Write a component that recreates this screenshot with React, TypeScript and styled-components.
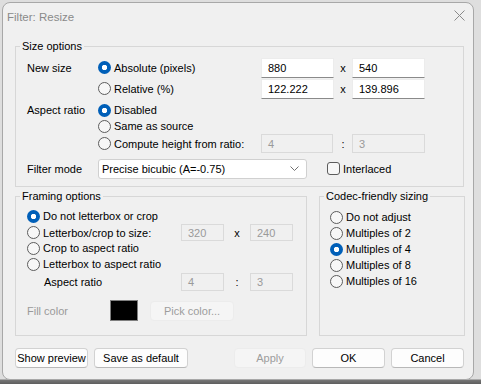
import styled, { createGlobalStyle } from "styled-components";

const GlobalStyle = createGlobalStyle`
  html, body {
    margin: 0;
    padding: 0;
  }
  body {
    width: 481px;
    height: 384px;
    overflow: hidden;
    background: linear-gradient(#dedede 0, #dedede 379px, #767676 380px, #5e5e5e 384px);
    font-family: "Liberation Sans", Arial, sans-serif;
    font-size: 11px;
    color: #000;
  }
`;

const Dialog = styled.div`
  margin: 2px 0 0 2px;
  width: 472px;
  height: 378px;
  box-sizing: border-box;
  border: 1px solid #a8a8a8;
  border-radius: 8px;
  background: #f0f0f0;
  display: flex;
  flex-direction: column;
`;

const TitleBar = styled.div`
  height: 30px;
  display: flex;
  justify-content: space-between;
  align-items: flex-start;
  padding: 6px 8px 0 4px;
  box-sizing: border-box;
`;

const Title = styled.span`
  font-size: 11.5px;
  line-height: 16px;
  color: #8a8a8a;
`;

const CloseIcon = styled.svg`
  margin-top: 1px;
`;

const Body = styled.div`
  padding: 6px 0 0 12px;
  display: flex;
  flex-direction: column;
`;

const Group = styled.fieldset<{ $w: number; $h?: number }>`
  margin: 0;
  padding: 0;
  min-width: 0;
  width: ${(p) => p.$w}px;
  ${(p) => (p.$h ? `height: ${p.$h}px;` : "")}
  box-sizing: border-box;
  border: 1px solid #d7d7d7;
`;

const Legend = styled.legend`
  margin-left: 4px;
  padding: 0 2px;
  line-height: 14px;
`;

const GroupContent = styled.div<{ $pt: number; $pl: number; $pb?: number }>`
  padding: ${(p) => p.$pt}px 0 ${(p) => p.$pb ?? 0}px ${(p) => p.$pl}px;
  display: flex;
  flex-direction: column;
`;

const SizeRow = styled.div<{ $h: number; $mt?: number }>`
  display: grid;
  grid-template-columns: 71px 163px 73px 18px 73px;
  align-items: center;
  height: ${(p) => p.$h}px;
  margin-top: ${(p) => p.$mt ?? 0}px;
`;

const FrameRow = styled.div<{ $h: number; $mt?: number; $indent?: number }>`
  display: grid;
  grid-template-columns: ${(p) => 154 - (p.$indent ?? 0)}px 43px 26px 43px;
  align-items: center;
  height: ${(p) => p.$h}px;
  margin-top: ${(p) => p.$mt ?? 0}px;
  padding-left: ${(p) => p.$indent ?? 0}px;
`;

const FlexRow = styled.div<{ $h: number; $mt?: number }>`
  display: flex;
  align-items: center;
  height: ${(p) => p.$h}px;
  margin-top: ${(p) => p.$mt ?? 0}px;
`;

const Label = styled.span<{ $w?: number; $muted?: boolean }>`
  ${(p) => (p.$w ? `width: ${p.$w}px; flex: none;` : "")}
  color: ${(p) => (p.$muted ? "#9a9a9a" : "#000")};
  white-space: nowrap;
`;

const Sep = styled.span`
  text-align: center;
`;

const Choice = styled.label<{ $ml?: number }>`
  display: flex;
  align-items: center;
  white-space: nowrap;
  margin-left: ${(p) => p.$ml ?? 0}px;
`;

const RadioDot = styled.span<{ $on?: boolean }>`
  width: 13px;
  height: 13px;
  box-sizing: border-box;
  border-radius: 50%;
  margin-right: 3px;
  flex: none;
  ${(p) =>
    p.$on
      ? `background: radial-gradient(circle, #fff 0 2.4px, #005fb8 3px);`
      : `background: #f7f7f7; border: 1px solid #5c5c5c;`}
`;

const CheckBox = styled.span`
  width: 13px;
  height: 13px;
  box-sizing: border-box;
  border: 1px solid #5c5c5c;
  border-radius: 3px;
  background: #f7f7f7;
  margin-right: 3px;
  flex: none;
`;

const Field = styled.div<{ $w: number; $h: number; $disabled?: boolean }>`
  width: ${(p) => p.$w}px;
  height: ${(p) => p.$h}px;
  box-sizing: border-box;
  display: flex;
  align-items: center;
  padding-left: 6px;
  ${(p) =>
    p.$disabled
      ? `background: #f0f0f0; border: 1px solid #dadada; color: #9a9a9a;`
      : `background: #fff; border: 1px solid #ececec; border-bottom-color: #8a8a8a; color: #000;`}
`;

const Select = styled.div`
  width: 209px;
  height: 20px;
  box-sizing: border-box;
  background: #fff;
  border: 1px solid #d0d0d0;
  border-radius: 3px;
  display: flex;
  align-items: center;
  justify-content: space-between;
  padding: 0 7px 0 3px;
`;

const Swatch = styled.div`
  width: 28px;
  height: 21px;
  box-sizing: border-box;
  background: #000;
  border: 1px solid #7f7f7f;
  flex: none;
`;

const Button = styled.button<{ $w: number; $ml?: number; $disabled?: boolean }>`
  width: ${(p) => p.$w}px;
  height: 20px;
  box-sizing: border-box;
  font: inherit;
  padding: 0;
  margin-left: ${(p) => p.$ml ?? 0}px;
  border-radius: 4px;
  ${(p) =>
    p.$disabled
      ? `background: #f5f5f5; border: 1px solid #ececec; color: #9d9d9d;`
      : `background: #fdfdfd; border: 1px solid #d2d2d2; border-bottom-color: #b8b8b8; color: #000;`}
`;

const BottomGroups = styled.div`
  display: flex;
  gap: 12px;
  margin-top: 2px;
`;

const ButtonBar = styled.div`
  display: flex;
  align-items: center;
  gap: 6px;
  margin-top: 12px;
  width: 449px;
`;

const Spacer = styled.div`
  flex: 1;
`;

const Radio = ({ on, children }: { on?: boolean; children: string }) => (
  <Choice>
    <RadioDot $on={on} />
    {children}
  </Choice>
);

const codecOptions = ["Do not adjust", "Multiples of 2", "Multiples of 4", "Multiples of 8", "Multiples of 16"];

export default function App() {
  return (
    <>
      <GlobalStyle />
      <Dialog>
        <TitleBar>
          <Title>Filter: Resize</Title>
          <CloseIcon width="11" height="11" viewBox="0 0 11 11">
            <path d="M0.5 0.5 L10.5 10.5 M10.5 0.5 L0.5 10.5" stroke="#8a8a8a" strokeWidth="1" fill="none" />
          </CloseIcon>
        </TitleBar>
        <Body>
          <Group $w={449}>
            <Legend>Size options</Legend>
            <GroupContent $pt={4} $pl={11} $pb={7}>
              <SizeRow $h={21}>
                <Label>New size</Label>
                <Radio on>Absolute (pixels)</Radio>
                <Field $w={73} $h={20}>880</Field>
                <Sep>x</Sep>
                <Field $w={73} $h={20}>540</Field>
              </SizeRow>
              <SizeRow $h={21}>
                <span />
                <Radio>Relative (%)</Radio>
                <Field $w={73} $h={20}>122.222</Field>
                <Sep>x</Sep>
                <Field $w={73} $h={20}>139.896</Field>
              </SizeRow>
              <SizeRow $h={16} $mt={3}>
                <Label>Aspect ratio</Label>
                <Radio on>Disabled</Radio>
              </SizeRow>
              <SizeRow $h={16}>
                <span />
                <Radio>Same as source</Radio>
              </SizeRow>
              <SizeRow $h={16}>
                <span />
                <Radio>Compute height from ratio:</Radio>
                <Field $w={72} $h={19} $disabled>4</Field>
                <Sep>:</Sep>
                <Field $w={73} $h={19} $disabled>3</Field>
              </SizeRow>
              <FlexRow $h={21} $mt={8}>
                <Label $w={71}>Filter mode</Label>
                <Select>
                  <span>Precise bicubic (A=-0.75)</span>
                  <svg width="9" height="5" viewBox="0 0 9 5">
                    <path d="M0.5 0.5 L4.5 4.5 L8.5 0.5" stroke="#707070" fill="none" />
                  </svg>
                </Select>
                <Choice $ml={20}>
                  <CheckBox />
                  Interlaced
                </Choice>
              </FlexRow>
            </GroupContent>
          </Group>

          <BottomGroups>
            <Group $w={292} $h={147}>
              <Legend>Framing options</Legend>
              <GroupContent $pt={5} $pl={11}>
                <FrameRow $h={16}>
                  <Radio on>Do not letterbox or crop</Radio>
                </FrameRow>
                <FrameRow $h={16}>
                  <Radio>Letterbox/crop to size:</Radio>
                  <Field $w={43} $h={17} $disabled>320</Field>
                  <Sep>x</Sep>
                  <Field $w={43} $h={17} $disabled>240</Field>
                </FrameRow>
                <FrameRow $h={16}>
                  <Radio>Crop to aspect ratio</Radio>
                </FrameRow>
                <FrameRow $h={16}>
                  <Radio>Letterbox to aspect ratio</Radio>
                </FrameRow>
                <FrameRow $h={18} $mt={1} $indent={17}>
                  <Label>Aspect ratio</Label>
                  <Field $w={43} $h={18} $disabled>4</Field>
                  <Sep>:</Sep>
                  <Field $w={43} $h={18} $disabled>3</Field>
                </FrameRow>
                <FlexRow $h={21} $mt={9}>
                  <Label $w={83} $muted>Fill color</Label>
                  <Swatch />
                  <Button $w={84} $ml={12} $disabled>
                    Pick color...
                  </Button>
                </FlexRow>
              </GroupContent>
            </Group>

            <Group $w={146} $h={147}>
              <Legend>Codec-friendly sizing</Legend>
              <GroupContent $pt={6} $pl={10}>
                {codecOptions.map((o) => (
                  <FlexRow key={o} $h={16}>
                    <Radio on={o === "Multiples of 4"}>{o}</Radio>
                  </FlexRow>
                ))}
              </GroupContent>
            </Group>
          </BottomGroups>

          <ButtonBar>
            <Button $w={73}>Show preview</Button>
            <Button $w={94}>Save as default</Button>
            <Spacer />
            <Button $w={72} $disabled>Apply</Button>
            <Button $w={73}>OK</Button>
            <Button $w={73}>Cancel</Button>
          </ButtonBar>
        </Body>
      </Dialog>
    </>
  );
}
